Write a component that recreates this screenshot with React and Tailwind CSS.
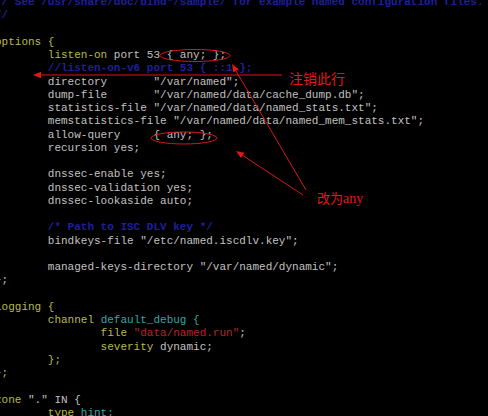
import React from 'react';

const Y = 'text-[#b9b94a]';
const G = 'text-[#c0c0c0]';
const B = 'text-[#1f1f9c] font-bold';
const C = 'text-[#35a6a6]';
const R = 'text-[#b42626]';

const lines = [
  [['// See /usr/share/doc/bind*/sample/ for example named configuration files.', B]],
  [['//', B]],
  [],
  [['options {', Y]],
  [['        listen-on', Y], [' port 53 { any; };', G]],
  [['        //listen-on-v6 port 53 { ::1 };', B]],
  [['        directory       "/var/named";', G]],
  [['        dump-file       "/var/named/data/cache_dump.db";', G]],
  [['        statistics-file "/var/named/data/named_stats.txt";', G]],
  [['        memstatistics-file "/var/named/data/named_mem_stats.txt";', G]],
  [['        allow-query     { any; };', G]],
  [['        recursion yes;', G]],
  [],
  [['        dnssec-enable yes;', G]],
  [['        dnssec-validation yes;', G]],
  [['        dnssec-lookaside auto;', G]],
  [],
  [['        /* Path to ISC DLV key */', B]],
  [['        bindkeys-file "/etc/named.iscdlv.key";', G]],
  [],
  [['        managed-keys-directory "/var/named/dynamic";', G]],
  [['};', G]],
  [],
  [['logging {', Y]],
  [['        channel', Y], [' default_debug {', C]],
  [['                file', Y], [' "data/named.run"', R], [';', G]],
  [['                severity', Y], [' dynamic;', G]],
  [['        };', Y]],
  [['};', Y]],
  [],
  [['zone', Y], [' "." IN {', G]],
  [['        type', Y], [' hint;', C]],
];

// arrowhead triangle pointing at (tx, ty), coming from (fx, fy)
function head(tx, ty, fx, fy) {
  const dx = tx - fx;
  const dy = ty - fy;
  const len = Math.hypot(dx, dy);
  const ux = dx / len;
  const uy = dy / len;
  const bx = tx - ux * 8;
  const by = ty - uy * 8;
  const px = -uy * 3.2;
  const py = ux * 3.2;
  return `${tx},${ty} ${bx + px},${by + py} ${bx - px},${by - py}`;
}

export default function App() {
  return (
    <div className="relative w-[488px] h-[416px] overflow-hidden bg-black">
      <pre className="-mt-[4px] -ml-[5px] font-['Liberation_Mono',monospace] text-[11px] leading-[13.25px] whitespace-pre">
        {lines.map((segs, i) => (
          <div key={i} className="h-[13.25px]">
            {segs.map(([t, c], j) => (
              <span key={j} className={c}>{t}</span>
            ))}
          </div>
        ))}
      </pre>

      <svg className="absolute left-0 top-0" width="488" height="416">
        <g stroke="#d81818" strokeWidth="1" fill="none">
          <ellipse cx="195" cy="55.5" rx="35" ry="6" />
          <ellipse cx="184" cy="138" rx="33" ry="6" />
          <line x1="40" y1="75" x2="282" y2="75" />
          <line x1="236" y1="71" x2="306" y2="190" />
          <line x1="242" y1="155" x2="303" y2="195" />
        </g>
        <g fill="#e01818">
          <polygon points={head(33, 75, 282, 75)} />
          <polygon points={head(232, 64, 306, 190)} />
          <polygon points={head(236, 151, 303, 195)} />
        </g>
      </svg>

      <div className="absolute left-[289px] top-[68px] text-[14px] leading-[20px] text-[#e01818] font-['Noto_Sans_CJK_SC',sans-serif]">
        注销此行
      </div>
      <div className="absolute left-[317px] top-[188px] text-[14px] leading-[20px] text-[#e01818] flex items-baseline">
        <span className="font-['Noto_Sans_CJK_SC',sans-serif] text-[13px]">改为</span>
        <span className="font-['Liberation_Serif',serif]">any</span>
      </div>
    </div>
  );
}
